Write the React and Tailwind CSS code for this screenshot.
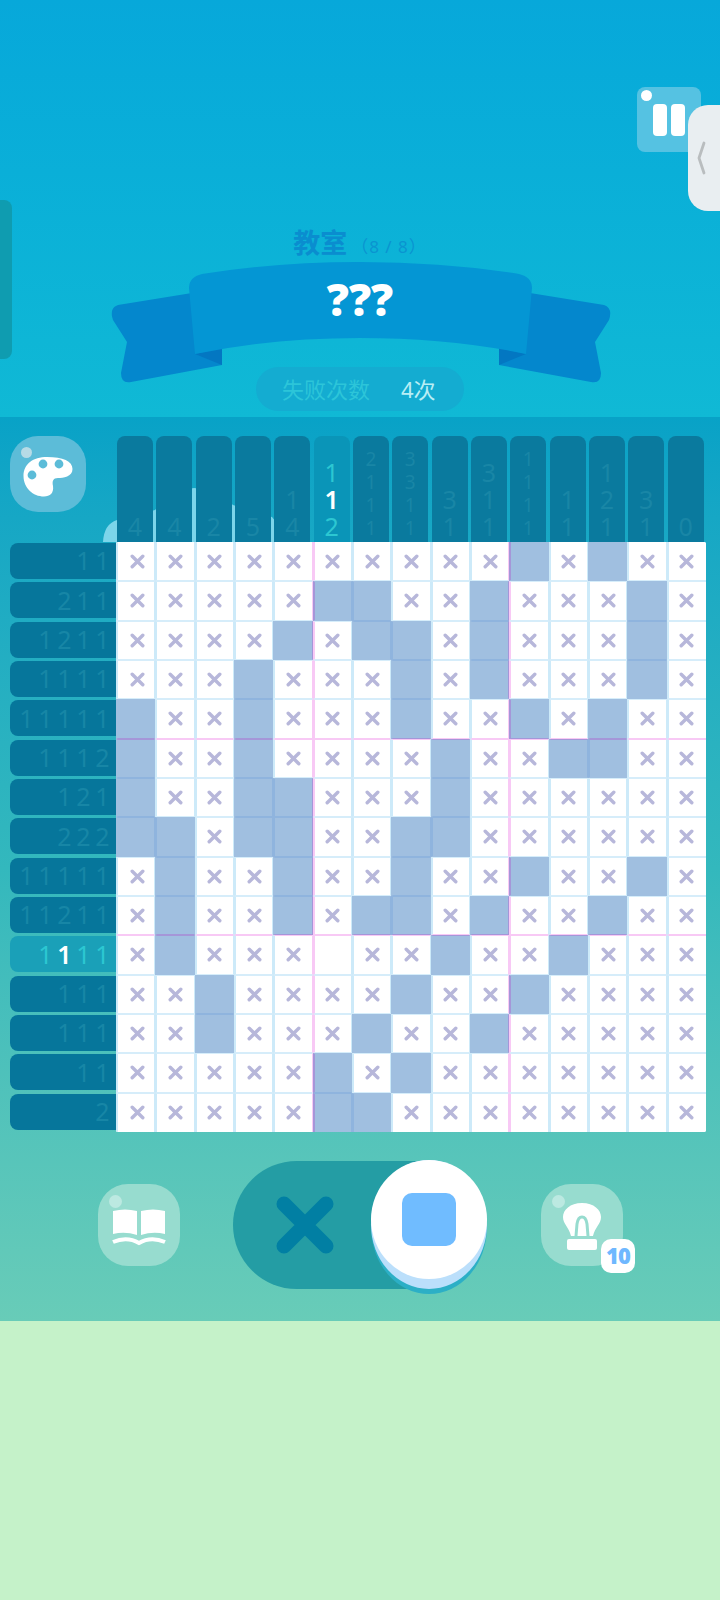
const FONT = '"Noto Sans", "Noto Sans CJK SC", sans-serif';

const rows = ['11', '211', '1211', '1111', '11111', '1112', '121', '222', '11111', '11211', '1111', '111', '111', '11', '2'];
const cols = ['4', '4', '2', '5', '14', '112', '2111', '3311', '31', '311', '1111', '11', '121', '31', '0'];
const filled = [
  [10, 12],
  [5, 6, 9, 13],
  [4, 6, 7, 9, 13],
  [3, 7, 9, 13],
  [0, 3, 7, 10, 12],
  [0, 3, 8, 11, 12],
  [0, 3, 4, 8],
  [0, 1, 3, 4, 7, 8],
  [1, 4, 7, 10, 13],
  [1, 4, 6, 7, 9, 12],
  [1, 8, 11],
  [2, 7, 10],
  [2, 6, 9],
  [5, 7],
  [5, 6],
];

const isOn = (r, c) => r >= 0 && r < 15 && filled[r].includes(c);

function Cross() {
  return (
    <svg width="15" height="15" viewBox="0 0 15 15">
      <path d="M2.2 2.2 L12.8 12.8 M12.8 2.2 L2.2 12.8" stroke="#b7b7da" strokeWidth="3.4" strokeLinecap="round" />
    </svg>
  );
}

function Cell({ r, c }) {
  const on = isOn(r, c);
  const blank = r === 10 && c === 5;
  const lPink = c === 5 || c === 10;
  const rPink = c === 4 || c === 9;
  const tPink = r === 5 || r === 10;
  const bPink = r === 4 || r === 9;

  const left = lPink
    ? on
      ? 'border-l-[#a596d8]'
      : 'border-l-[#f8c9f5]'
    : on
      ? isOn(r, c - 1)
        ? 'border-l-[#8fb4de]'
        : 'border-l-[#a0bfe0]'
      : 'border-l-[#cdeaf9]';
  const right = rPink
    ? on
      ? 'border-r-[#a596d8]'
      : 'border-r-[#f8c9f5]'
    : on
      ? isOn(r, c + 1)
        ? 'border-r-[#8fb4de]'
        : 'border-r-[#a0bfe0]'
      : 'border-r-[#cdeaf9]';
  const top = tPink
    ? on
      ? 'border-t-[#a596d8]'
      : 'border-t-[#f8c9f5]'
    : on
      ? isOn(r - 1, c)
        ? 'border-t-[#8fb4de]'
        : 'border-t-[#a0bfe0]'
      : 'border-t-[#d6edfa]';
  const bottom = bPink
    ? on
      ? 'border-b-[#a596d8]'
      : 'border-b-[#f8c9f5]'
    : on
      ? isOn(r + 1, c)
        ? 'border-b-[#8fb4de]'
        : 'border-b-[#a0bfe0]'
      : 'border-b-[#d6edfa]';

  return (
    <div
      className={`flex items-center justify-center border-l-2 border-r border-t border-b ${on ? 'bg-[#a0bfe0]' : 'bg-white'} ${left} ${right} ${top} ${bottom} ${
        c === 0 ? 'border-l-0 pl-[2px]' : ''
      } ${c === 14 ? 'border-r-0 pr-[1px]' : ''} ${r === 0 ? 'border-t-0 pt-[1px]' : ''} ${r === 14 ? 'border-b-0 pb-[1px]' : ''}`}
    >
      {!on && !blank && <Cross />}
    </div>
  );
}

function ColClue({ text, active }) {
  const long = text.length >= 4;
  const items = text.split('');
  return (
    <div
      className={`w-[36px] h-[106px] rounded-t-lg flex flex-col items-center justify-end pb-[2px] ${
        active ? 'bg-[#0a95b8]' : 'bg-[#0a7a9e]'
      } ${long ? 'text-[19px] leading-[23px]' : 'text-[25px] leading-[27px]'}`}
    >
      {items.map((d, i) => (
        <span
          key={i}
          className={active ? (i === 1 ? 'text-white font-semibold' : 'text-[#2cc7d2]') : 'text-[#1986a6]'}
        >
          {d}
        </span>
      ))}
    </div>
  );
}

function RowClue({ text, active }) {
  return (
    <div
      className={`h-[36px] w-[106px] rounded-l-lg flex items-center justify-end pr-[4px] text-[25px] ${
        active ? 'bg-[#1aa0b8]' : 'bg-[#06769b]'
      }`}
    >
      {text.split('').map((d, i) => (
        <span
          key={i}
          className={`w-[19px] text-center ${
            active ? (i === 1 ? 'text-white font-semibold' : 'text-[#2cc7d2]') : 'text-[#1786a6]'
          }`}
        >
          {d}
        </span>
      ))}
    </div>
  );
}

function Ribbon() {
  return (
    <svg width="520" height="130" viewBox="100 258 520 130" className="absolute left-[100px] top-[258px]">
      <path d="M192 293 L118 305 Q109 308 113 320 L127 342 L121 373 Q121 384 131 382 L222 365 L222 330 Z" fill="#0487cd" />
      <path d="M530 293 L604 305 Q613 308 609 320 L595 342 L601 373 Q601 384 591 382 L499 365 L499 330 Z" fill="#0487cd" />
      <path d="M195 354 L222 348 L222 365 Z" fill="#0377c2" />
      <path d="M526 354 L499 348 L499 365 Z" fill="#0377c2" />
      <path d="M189 288 Q189 277 202 274 Q275 262 360 262 Q445 262 519 274 Q532 277 532 288 L526 354 Q450 338 360 338 Q270 338 195 354 Z" fill="#0496d4" />
    </svg>
  );
}

function Dot({ className }) {
  return <span className={`absolute rounded-full ${className}`} />;
}

export default function App() {
  return (
    <div className="relative w-[720px] h-[1600px] overflow-hidden bg-[#c5f2c9]" style={{ fontFamily: FONT }}>
      {/* header */}
      <div className="relative h-[417px] bg-gradient-to-b from-[#07a8da] to-[#10b9d5]">
        {/* left handle */}
        <div className="absolute left-0 top-[200px] w-[12px] h-[159px] bg-[#0f9cb0] rounded-r-lg" />
        {/* pause */}
        <div className="absolute left-[637px] top-[87px] w-[64px] h-[65px] bg-[#55c2e2] rounded-lg">
          <Dot className="left-[4px] top-[3px] w-[11px] h-[11px] bg-white" />
          <span className="absolute left-[16px] top-[17px] w-[14px] h-[32px] rounded bg-white" />
          <span className="absolute left-[34px] top-[17px] w-[14px] h-[32px] rounded bg-white" />
        </div>
        {/* edge tab */}
        <div className="absolute left-[688px] top-[105px] w-[32px] h-[106px] bg-[#e9eef1] rounded-l-[20px] flex items-center pl-[9px]">
          <svg width="10" height="34" viewBox="0 0 10 34">
            <path d="M7 2 L2 17 L7 32" fill="none" stroke="#b9bdbf" strokeWidth="2.8" strokeLinecap="round" strokeLinejoin="round" />
          </svg>
        </div>

        <Ribbon />

        <div className="relative flex flex-col items-center pt-[224px]">
          <div className="flex items-baseline h-[38px]">
            <span className="text-[27px] leading-[38px] font-bold text-[#0a8dcf]">教室</span>
            <span className="text-[17px] leading-[38px] text-[#0a94d0] ml-[4px] tracking-[1px]">（8 / 8）</span>
          </div>
          <div className="mt-[13px] h-[48px] flex items-center text-[44px] leading-[48px] font-black text-white">???</div>
          <div className="mt-[44px] w-[208px] h-[44px] rounded-full bg-[#14acd1] flex items-center pl-[26px] text-[22px]">
            <span className="text-[#2cc5d9]">失败次数</span>
            <span className="ml-[31px] text-[#b8eef5]">4次</span>
          </div>
        </div>
      </div>

      {/* board panel */}
      <div className="relative h-[904px] bg-gradient-to-b from-[#08a2c7] via-[#33b8bd] to-[#68ccb8] pt-[19px]">
        {/* cloud behind the clue bars */}
        <svg width="190" height="56" viewBox="100 486 190 56" className="absolute left-[100px] top-[69px]">
          <path d="M103 542 Q104 524 117 520 L155 510 Q175 490 194 488 Q218 490 233 505 L272 517 Q280 525 282 542 Z" fill="#7cd5ea" />
        </svg>

        <div className="relative flex items-end pl-[10px]">
          <div className="w-[106px] h-[106px] flex items-start">
            <div className="relative w-[76px] h-[76px] rounded-[28px] bg-[#5cbcd8] flex items-center justify-center">
              <Dot className="left-[11px] top-[11px] w-[11px] h-[11px] bg-[#b7dbe6]" />
              <svg width="50" height="40" viewBox="0 0 50 40" className="mt-[6px]">
                <path
                  d="M24 0 C40 0 49.5 4 49.5 12 C49.5 20 40 21 35 21 C30 21 29 24 30 29 C31 36 27 39.5 21 39.5 C10 39.5 0.5 31 0.5 19 C0.5 7 10 0 24 0 Z"
                  fill="#fff"
                />
                <circle cx="20" cy="7" r="4.4" fill="#5cbcd8" />
                <circle cx="36" cy="7" r="4.4" fill="#5cbcd8" />
                <circle cx="9" cy="18" r="4.4" fill="#5cbcd8" />
              </svg>
            </div>
          </div>
          <div className="grid grid-cols-[repeat(15,39.33px)] pl-[1px]">
            {cols.map((t, i) => (
              <ColClue key={i} text={t} active={i === 5} />
            ))}
          </div>
        </div>

        <div className="relative flex pl-[10px]">
          <div className="grid grid-rows-[repeat(15,39.33px)] items-start w-[106px] pt-[1px]">
            {rows.map((t, i) => (
              <RowClue key={i} text={t} active={i === 10} />
            ))}
          </div>
          <div className="grid grid-cols-[repeat(15,minmax(0,1fr))] grid-rows-[repeat(15,minmax(0,1fr))] w-[590px] h-[590px] bg-white rounded-[2px] overflow-hidden">
            {rows.map((_, r) => cols.map((__, c) => <Cell key={`${r}-${c}`} r={r} c={c} />))}
          </div>
        </div>

        {/* controls */}
        <div className="relative flex items-center h-[130px] mt-[27px] pl-[98px]">
          <div className="relative w-[82px] h-[82px] rounded-[30px] bg-[#97dccf] flex items-center justify-center">
            <Dot className="left-[11px] top-[11px] w-[13px] h-[13px] bg-[#bce9e1]" />
            <svg width="54" height="38" viewBox="0 0 54 38" className="mt-[7px]">
              <path d="M1 2 Q13 -1 25 2 L25 26 Q13 22 1 25 Z" fill="#fff" />
              <path d="M53 2 Q41 -1 29 2 L29 26 Q41 22 53 25 Z" fill="#fff" />
              <path d="M1 33 Q15 27 27 34 Q39 27 53 33" fill="none" stroke="#fff" strokeWidth="4" />
            </svg>
          </div>

          <div className="relative ml-[53px] w-[254px] h-[128px] rounded-full bg-[#249da4] flex items-center pl-[43px]">
            <svg width="58" height="58" viewBox="0 0 58 58">
              <path d="M8 8 L50 50 M50 8 L8 50" stroke="#017fa3" strokeWidth="15" strokeLinecap="round" />
            </svg>
            <div className="absolute left-[138px] top-[-1px] w-[116px] h-[134px] rounded-[50%] bg-[#2cafc6]" />
            <div className="absolute left-[138px] top-[-1px] w-[116px] h-[129px] rounded-[50%] bg-[#bbdffb]" />
            <div className="absolute left-[138px] top-[-1px] w-[116px] h-[119px] rounded-[50%] bg-white flex items-center justify-center">
              <div className="w-[54px] h-[53px] rounded-[10px] bg-[#70bcff]" />
            </div>
          </div>

          <div className="relative ml-[54px] w-[82px] h-[82px] rounded-[30px] bg-[#97dccf] flex items-center justify-center">
            <Dot className="left-[11px] top-[11px] w-[13px] h-[13px] bg-[#bce9e1]" />
            <svg width="40" height="47" viewBox="0 0 40 47" className="mt-[3px]">
              <path
                d="M20 0 C32 0 39 7 39 14 C39 21 33 24 31 33 L9 33 C7 24 1 21 1 14 C1 7 8 0 20 0 Z"
                fill="#fff"
              />
              <path d="M14 33 L15 21 Q16 14 20 14 Q24 14 25 21 L26 33" fill="none" stroke="#97dccf" strokeWidth="3" />
              <rect x="5" y="36" width="30" height="11" rx="2" fill="#fff" />
            </svg>
            <div className="absolute left-[60px] top-[55px] w-[34px] h-[34px] rounded-[10px] bg-white flex items-center justify-center text-[22px] font-black text-[#6fb8ff] tracking-[-1px]">
              10
            </div>
          </div>
        </div>
      </div>
    </div>
  );
}
